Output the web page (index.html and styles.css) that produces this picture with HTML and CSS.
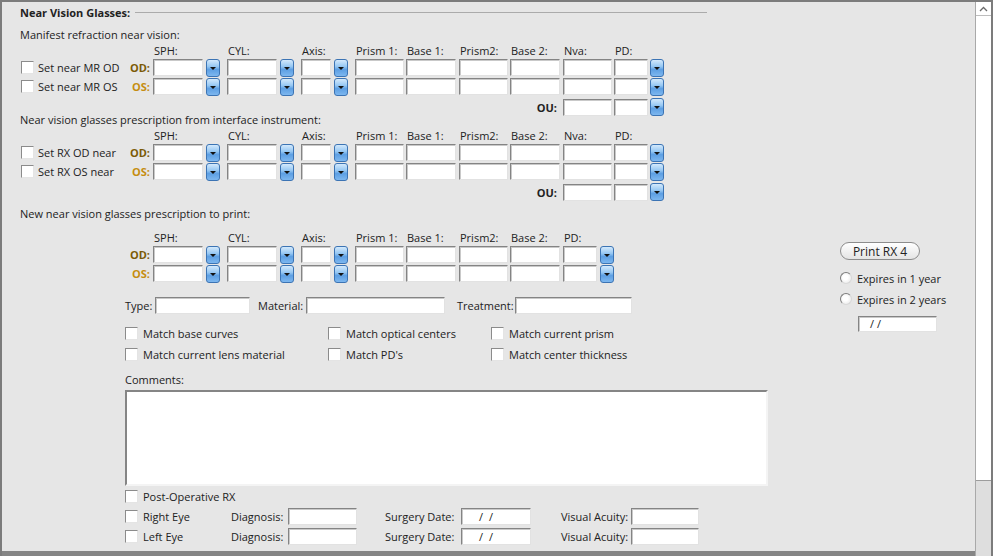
FILE: index.html
```html
<!DOCTYPE html>
<html lang="en">
<head>
  <meta charset="UTF-8" />
  <title>Near Vision Glasses</title>
  <link rel="stylesheet" href="styles.css">
</head>
<body>
  <div class="window">
    <div class="content">
      <div class="group-title"><span>Near Vision Glasses:</span><span class="rule"></span></div>

      <!-- manifest refraction -->
      <div class="rx-block">
        <div class="sub">Manifest refraction near vision:</div>
        <div class="rx-grid hdr">
          <span></span>
          <span>SPH:</span><span></span><span>CYL:</span><span></span><span>Axis:</span><span></span>
          <span>Prism 1:</span><span>Base 1:</span><span>Prism2:</span><span>Base 2:</span><span>Nva:</span><span>PD:</span><span></span>
        </div>
        <div class="rx-grid row">
          <div class="lead"><span class="cb"></span>Set near MR OD<b class="eye od">OD:</b></div>
          <span class="tb w50"></span><span class="dd"></span>
          <span class="tb w50"></span><span class="dd"></span>
          <span class="tb w30"></span><span class="dd"></span>
          <span class="tb w49"></span><span class="tb w50"></span><span class="tb w49"></span><span class="tb w50"></span>
          <span class="tb w49"></span><span class="tb w34"></span><span class="dd"></span>
        </div>
        <div class="rx-grid row">
          <div class="lead"><span class="cb"></span>Set near MR OS<b class="eye os">OS:</b></div>
          <span class="tb w50"></span><span class="dd"></span>
          <span class="tb w50"></span><span class="dd"></span>
          <span class="tb w30"></span><span class="dd"></span>
          <span class="tb w49"></span><span class="tb w50"></span><span class="tb w49"></span><span class="tb w50"></span>
          <span class="tb w49"></span><span class="tb w34"></span><span class="dd"></span>
        </div>
        <div class="rx-grid row ou-row">
          <b class="ou">OU:</b>
          <span class="tb w49"></span><span class="tb w34"></span><span class="dd"></span>
        </div>
      </div>

      <!-- interface instrument -->
      <div class="rx-block">
        <div class="sub">Near vision glasses prescription from interface instrument:</div>
        <div class="rx-grid hdr">
          <span></span>
          <span>SPH:</span><span></span><span>CYL:</span><span></span><span>Axis:</span><span></span>
          <span>Prism 1:</span><span>Base 1:</span><span>Prism2:</span><span>Base 2:</span><span>Nva:</span><span>PD:</span><span></span>
        </div>
        <div class="rx-grid row">
          <div class="lead"><span class="cb"></span>Set RX OD near<b class="eye od">OD:</b></div>
          <span class="tb w50"></span><span class="dd"></span>
          <span class="tb w50"></span><span class="dd"></span>
          <span class="tb w30"></span><span class="dd"></span>
          <span class="tb w49"></span><span class="tb w50"></span><span class="tb w49"></span><span class="tb w50"></span>
          <span class="tb w49"></span><span class="tb w34"></span><span class="dd"></span>
        </div>
        <div class="rx-grid row">
          <div class="lead"><span class="cb"></span>Set RX OS near<b class="eye os">OS:</b></div>
          <span class="tb w50"></span><span class="dd"></span>
          <span class="tb w50"></span><span class="dd"></span>
          <span class="tb w30"></span><span class="dd"></span>
          <span class="tb w49"></span><span class="tb w50"></span><span class="tb w49"></span><span class="tb w50"></span>
          <span class="tb w49"></span><span class="tb w34"></span><span class="dd"></span>
        </div>
        <div class="rx-grid row ou-row">
          <b class="ou">OU:</b>
          <span class="tb w49"></span><span class="tb w34"></span><span class="dd"></span>
        </div>
      </div>

      <!-- prescription to print -->
      <div class="print-block">
        <div class="print-main">
          <div class="sub">New near vision glasses prescription to print:</div>
          <div class="rx-grid print hdr">
            <span></span>
            <span>SPH:</span><span></span><span>CYL:</span><span></span><span>Axis:</span><span></span>
            <span>Prism 1:</span><span>Base 1:</span><span>Prism2:</span><span>Base 2:</span><span>PD:</span><span></span>
          </div>
          <div class="rx-grid print row first">
            <div class="lead"><b class="eye od">OD:</b></div>
            <span class="tb w50"></span><span class="dd"></span>
            <span class="tb w50"></span><span class="dd"></span>
            <span class="tb w30"></span><span class="dd"></span>
            <span class="tb w49"></span><span class="tb w50"></span><span class="tb w49"></span><span class="tb w50"></span>
            <span class="tb w34"></span><span class="dd"></span>
          </div>
          <div class="rx-grid print row">
            <div class="lead"><b class="eye os">OS:</b></div>
            <span class="tb w50"></span><span class="dd"></span>
            <span class="tb w50"></span><span class="dd"></span>
            <span class="tb w30"></span><span class="dd"></span>
            <span class="tb w49"></span><span class="tb w50"></span><span class="tb w49"></span><span class="tb w50"></span>
            <span class="tb w34"></span><span class="dd"></span>
          </div>

          <div class="lens-row">
            <span class="lbl-type">Type:</span><span class="tb w95"></span>
            <span class="lbl-mat">Material:</span><span class="tb w139"></span>
            <span class="lbl-treat">Treatment:</span><span class="tb w117"></span>
          </div>

          <div class="opts">
            <div class="opt"><span class="cb"></span>Match base curves</div>
            <div class="opt"><span class="cb"></span>Match optical centers</div>
            <div class="opt"><span class="cb"></span>Match current prism</div>
            <div class="opt"><span class="cb"></span>Match current lens material</div>
            <div class="opt"><span class="cb"></span>Match PD's</div>
            <div class="opt"><span class="cb"></span>Match center thickness</div>
          </div>

          <div class="cmt-label">Comments:</div>
          <div class="comments"></div>

          <div class="opt postop"><span class="cb"></span>Post-Operative RX</div>
          <div class="surg-row">
            <div class="eye-cell"><span class="cb"></span>Right Eye</div>
            <span class="lbl-diag">Diagnosis:</span><span class="tb w69"></span>
            <span class="lbl-date">Surgery Date:</span><span class="tb w70 date">/ /</span>
            <span class="lbl-va">Visual Acuity:</span><span class="tb w68"></span>
          </div>
          <div class="surg-row">
            <div class="eye-cell"><span class="cb"></span>Left Eye</div>
            <span class="lbl-diag">Diagnosis:</span><span class="tb w69"></span>
            <span class="lbl-date">Surgery Date:</span><span class="tb w70 date">/ /</span>
            <span class="lbl-va">Visual Acuity:</span><span class="tb w68"></span>
          </div>
        </div>

        <div class="print-side">
          <button class="print-btn">Print RX 4</button>
          <div class="radio-row"><span class="rb"></span>Expires in 1 year</div>
          <div class="radio-row second"><span class="rb"></span>Expires in 2 years</div>
          <div class="tb exp-date">/ /</div>
        </div>
      </div>
    </div>

    <div class="scrollbar">
      <div class="sb-up">
        <svg width="9" height="6" viewBox="0 0 9 6"><polyline points="1,5 4.5,1.5 8,5" fill="none" stroke="#6a6a6a" stroke-width="1.3"/></svg>
      </div>
      <div class="sb-track"></div>
      <div class="sb-thumb"></div>
    </div>
  </div>
</body>
</html>
```

FILE: styles.css
```css
body {
  margin: 0;
  background: #808080;
  font-family: "Open Sans", "Liberation Sans", sans-serif;
  font-size: 11px;
  color: #222;
  overflow: hidden;
}

.window {
  display: flex;
  width: 993px;
  height: 556px;
  box-sizing: border-box;
  border-top: 2px solid #7c7c7c;
  border-left: 2px solid #7c7c7c;
  background: #e6e6e6;
}

.content {
  flex: 1;
  height: 554px;
  box-sizing: border-box;
  border-bottom: 5px solid #858585;
}

/* group header */
.group-title {
  display: flex;
  align-items: center;
  width: 705px;
  height: 20px;
  padding-left: 18px;
  box-sizing: border-box;
  font-weight: bold;
}

.group-title .rule {
  flex: 1;
  height: 1px;
  margin-left: 5px;
  background: #ababab;
}

.sub {
  height: 10px;
  line-height: 10px;
  padding-left: 18px;
  white-space: nowrap;
}

.rx-block {
  margin-top: 8px;
}

.rx-block + .rx-block {
  margin-top: 0;
}

/* refraction tables */
.rx-grid {
  display: grid;
  grid-template-columns: 151px 53px 21px 53px 21px 33px 21px 51px 53px 51px 53px 51px 36px 14px;
  align-items: center;
}

.rx-grid.print {
  grid-template-columns: 151px 53px 21px 53px 21px 33px 21px 51px 53px 51px 53px 37px 14px;
}

.rx-grid.hdr {
  height: 12px;
  line-height: 12px;
  margin-top: 5px;
  white-space: nowrap;
}

.rx-grid.hdr span {
  padding-left: 1px;
}

.rx-grid.row {
  height: 19px;
}

.rx-block .rx-grid.row:nth-child(3) {
  margin-top: 1px;
}

.rx-grid.ou-row {
  height: 17px;
  margin-top: 2px;
}

.ou {
  grid-column: 1 / 12;
  text-align: right;
  padding-right: 6px;
}

.lead {
  display: flex;
  align-items: center;
  padding-left: 19px;
  padding-right: 3px;
  white-space: nowrap;
}

.lead .cb {
  margin-right: 4px;
}

.eye {
  margin-left: auto;
}

.eye.od {
  color: #7b5a07;
}

.eye.os {
  color: #c58d10;
}

/* inputs */
.tb {
  display: block;
  height: 17px;
  box-sizing: border-box;
  background: #fff;
  border: 1px solid;
  border-color: #848484 #e2e2e2 #e2e2e2 #848484;
  box-shadow: inset 1px 1px 0 #c9c9c9;
}

.w30 { width: 30px; }
.w34 { width: 34px; }
.w49 { width: 49px; }
.w50 { width: 50px; }
.w68 { width: 68px; }
.w69 { width: 69px; }
.w70 { width: 70px; }
.w95 { width: 95px; }
.w117 { width: 117px; }
.w139 { width: 139px; }

.dd {
  display: flex;
  align-items: center;
  justify-content: center;
  width: 14px;
  height: 18px;
  box-sizing: border-box;
  border: 1px solid #3c74b4;
  border-radius: 3px;
  background: linear-gradient(#d3e9fc 0%, #97c8f3 40%, #5d9fe3 60%, #7db7ef 100%);
}

.dd::after {
  content: "";
  border-left: 3px solid transparent;
  border-right: 3px solid transparent;
  border-top: 3px solid #111;
  margin-top: 1px;
}

.cb {
  display: inline-block;
  flex: none;
  width: 13px;
  height: 13px;
  box-sizing: border-box;
  background: #fff;
  border: 1px solid;
  border-color: #8b8b8b #e4e4e4 #e4e4e4 #8b8b8b;
}

/* print section */
.print-block {
  display: flex;
  margin-top: 9px;
}

.print-main {
  width: 836px;
}

.print-main .hdr {
  margin-top: 13px;
}

.rx-grid.first {
  margin-top: 1px;
}

.lens-row,
.opts,
.cmt-label,
.comments,
.postop,
.surg-row {
  margin-left: 123px;
}

.lens-row {
  display: flex;
  align-items: center;
  height: 17px;
  margin-top: 14px;
}

.lbl-type { width: 30px; }
.lbl-mat { width: 48px; margin-left: 8px; }
.lbl-treat { width: 58px; margin-left: 12px; }

.opts {
  display: grid;
  grid-template-columns: 203px 163px auto;
  grid-auto-rows: 13px;
  row-gap: 8px;
  margin-top: 13px;
}

.opt {
  display: flex;
  align-items: center;
  height: 13px;
  white-space: nowrap;
}

.opt .cb,
.eye-cell .cb {
  margin-right: 5px;
}

.cmt-label {
  height: 12px;
  line-height: 12px;
  margin-top: 13px;
}

.comments {
  width: 643px;
  height: 96px;
  margin-top: 4px;
  box-sizing: border-box;
  background: #fff;
  border: 2px solid;
  border-color: #858585 #f4f4f4 #f4f4f4 #858585;
}

.postop {
  margin-top: 4px;
}

.surg-row {
  display: flex;
  align-items: center;
  height: 17px;
  margin-top: 5px;
  white-space: nowrap;
}

.surg-row + .surg-row {
  margin-top: 3px;
}

.eye-cell {
  display: flex;
  align-items: center;
  width: 106px;
}

.lbl-diag { width: 57px; }
.lbl-date { width: 76px; margin-left: 28px; }
.lbl-va { width: 70px; margin-left: 30px; }

.date {
  line-height: 15px;
  padding-left: 17px;
  word-spacing: 3px;
}

.print-side {
  display: flex;
  flex-direction: column;
  align-items: flex-start;
  padding-left: 2px;
}

.print-btn {
  width: 80px;
  height: 18px;
  margin-top: 33px;
  padding: 0;
  font-family: inherit;
  font-size: 12px;
  color: #222;
  border: 1px solid #8c8c8c;
  border-radius: 9px;
  background: linear-gradient(#ffffff, #e4e4e4);
}

.radio-row {
  display: flex;
  align-items: center;
  height: 16px;
  margin-top: 10px;
  white-space: nowrap;
}

.radio-row.second {
  margin-top: 5px;
}

.rb {
  width: 12px;
  height: 12px;
  box-sizing: border-box;
  margin-right: 5px;
  border-radius: 50%;
  border: 1px solid;
  border-color: #7d7d7d #d8d8d8 #d8d8d8 #7d7d7d;
  background: radial-gradient(circle at 45% 45%, #ffffff 30%, #e2e2e2 100%);
}

.exp-date {
  width: 79px;
  height: 16px;
  margin-top: 9px;
  margin-left: 18px;
  line-height: 14px;
  padding-left: 11px;
}

/* scrollbar */
.scrollbar {
  display: flex;
  flex-direction: column;
  width: 18px;
  height: 554px;
  box-sizing: border-box;
  border-left: 1px solid #a9a9a9;
  border-right: 2px solid #7c7c7c;
  background: #fff;
}

.sb-up {
  display: flex;
  align-items: center;
  justify-content: center;
  height: 13px;
  border-bottom: 1px solid #bdbdbd;
}

.sb-track {
  flex: 1;
}

.sb-thumb {
  height: 75px;
  background: #dedede;
  border-top: 1px solid #9c9c9c;
}
```
